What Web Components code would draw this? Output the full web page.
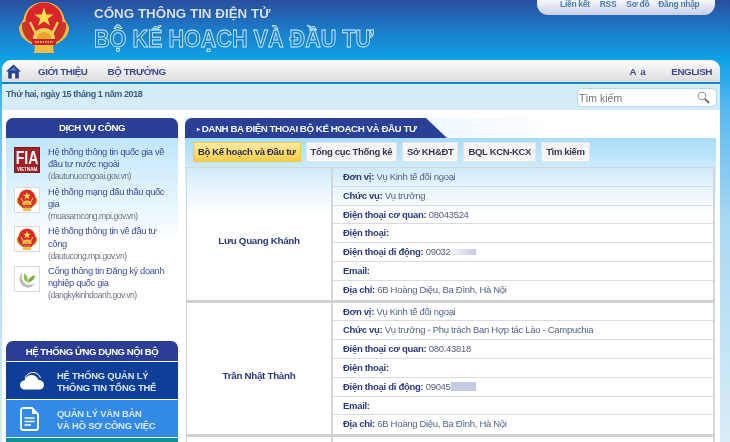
<!DOCTYPE html>
<html lang="vi">
<head>
<meta charset="utf-8">
<title>Danh bạ điện thoại</title>
<style>
    html, body { margin: 0; height: 442px; overflow: hidden; }
    body { font-family: "Liberation Sans", Arial, sans-serif; }
</style>
</head>
<body>
<site-page>
    <site-header></site-header>
    <site-nav></site-nav>
    <date-bar></date-bar>
    <page-columns>
        <side-column slot="side">
            <side-card heading="DỊCH VỤ CÔNG">
                <service-item icon="fia" domain="(dautunuocngoai.gov.vn)">Hệ thống thông tin quốc gia về đầu tư nước ngoài</service-item>
                <service-item icon="emblem" domain="(muasamcong.mpi.gov.vn)">Hệ thống mạng đấu thầu quốc gia</service-item>
                <service-item icon="emblem" domain="(dautucong.mpi.gov.vn)">Hệ thống thông tin về đầu tư công</service-item>
                <service-item icon="leaf" domain="(dangkykinhdoanh.gov.vn)">Cổng thông tin Đăng ký doanh nghiệp quốc gia</service-item>
            </side-card>
            <app-list heading="HỆ THỐNG ỨNG DỤNG NỘI BỘ">
                <app-tile icon="cloud" color="#0d3f98" line1="HỆ THỐNG QUẢN LÝ" line2="THÔNG TIN TỔNG THỂ"></app-tile>
                <app-tile icon="doc" color="#3389e6" line1="QUẢN LÝ VĂN BẢN" line2="VÀ HỒ SƠ CÔNG VIỆC"></app-tile>
                <app-tile icon="" color="#0f8f96" line1="" line2=""></app-tile>
            </app-list>
        </side-column>
        <dir-panel slot="main" heading="DANH BẠ ĐIỆN THOẠI BỘ KẾ HOẠCH VÀ ĐẦU TƯ">
            <contact-card name="Lưu Quang Khánh" unit="Vụ Kinh tế đối ngoại" role="Vụ trưởng" office="08043524" mobile="09032" mask="soft"></contact-card>
            <contact-card name="Trần Nhật Thành" unit="Vụ Kinh tế đối ngoại" role="Vụ trưởng - Phụ trách Ban Hợp tác Lào - Campuchia" office="080.43818" mobile="09045" mask="solid"></contact-card>
            <contact-card name="" unit="Vụ Kinh tế đối ngoại" role="" office="" mobile=""></contact-card>
        </dir-panel>
    </page-columns>
</site-page>

<script>
// shared drawing for the state emblem, used in the header and in the service list
const EMBLEM = `
    <svg viewBox="0 0 52 52" width="100%" height="100%" aria-hidden="true">
        <path d="M26 1C37 1 45 8 46.500 18L51 26C51 34 46 39 40 42L35 45L36 52H16L17 45L12 42C6 39 1 34 1 26L5.500 18C7 8 15 1 26 1Z" fill="#f2bd45"/>
        <circle cx="26" cy="20" r="18.500" fill="#d9262c"/>
        <path d="M4 22L9 20C10 27 13 31 17 35L15 42C9 39 3 33 4 22ZM48 22L43 20C42 27 39 31 35 35L37 42C43 39 49 33 48 22Z" fill="#c9362a"/>
        <path d="M26 6.500L28.300 13.400H35.600L29.700 17.700L32 24.600L26 20.400L20 24.600L22.300 17.700L16.400 13.400H23.700Z" fill="#fbe04a"/>
        <path d="M15 38C15 31 20 27 26 27C32 27 37 31 37 38Z" fill="#f7cf55"/>
        <path d="M19 38C19 34 22 31 26 31C30 31 33 34 33 38Z" fill="#e9a52e"/>
        <path d="M12 21L18 33M40 21L34 33" stroke="#f6cf5a" stroke-width="2.500"/>
        <rect x="14" y="38" width="24" height="6" fill="#c9242a"/>
        <path d="M17 41H35" stroke="#f7d76a" stroke-width="1.500" stroke-dasharray="1.500 1"/>
    </svg>`;

class SitePage extends HTMLElement {
    constructor() {
        super();
        this.attachShadow({ mode: 'open' });
        this.shadowRoot.innerHTML = `
            <style>
                :host {
                    display: block;
                    height: 442px;
                    overflow: hidden;
                    /* the reference is a soft, downscaled capture */
                    filter: blur(0.35px);
                    background: linear-gradient(#2a4f9f 0, #1b7cc8 30px, #0fa2e6 60px, #5ab9ee 110px, #a9d8f2 220px, #d8edf8 442px);
                }
            </style>
            <slot></slot>
        `;
    }
}

class SiteHeader extends HTMLElement {
    constructor() {
        super();
        this.attachShadow({ mode: 'open' });
        this.shadowRoot.innerHTML = `
            <style>
                :host {
                    display: flex;
                    height: 60px;
                    padding-left: 18px;
                    box-sizing: border-box;
                    justify-content: space-between;
                    align-items: flex-start;
                }
                .brand { display: flex; }
                .emblem { width: 52px; height: 52px; margin-top: 1px; }
                .titles { margin-left: 24px; padding-top: 5px; font-weight: bold; }
                .small {
                    color: #d9e0ea;
                    font-size: 13.400px;
                    line-height: 18px;
                    text-shadow: 0 0 1px #1d3f86;
                }
                .big {
                    color: #1a80d0;
                    font-size: 21.600px;
                    line-height: 28px;
                    margin-top: 2px;
                    transform: scaleY(1.12);
                    -webkit-text-stroke: 0.800px #cfeeff;
                    white-space: nowrap;
                }
                .links {
                    display: flex;
                    width: 178px;
                    box-sizing: border-box;
                    margin-right: 15px;
                    height: 15px;
                    padding: 0 0 0 23px;
                    background: linear-gradient(#f6f7fb, #c8d0e6);
                    border-radius: 0 0 11px 11px;
                    font-size: 8.500px;
                    font-weight: bold;
                    letter-spacing: -0.300px;
                    line-height: 8px;
                    color: #4a7db8;
                }
                .links span:nth-child(1) { margin-right: 10px; }
                .links span:nth-child(2) { margin-right: 10px; }
                .links span:nth-child(3) { margin-right: 9px; }
            </style>
            <div class="brand">
                <div class="emblem">${EMBLEM}</div>
                <div class="titles">
                    <div class="small">CỔNG THÔNG TIN ĐIỆN TỬ</div>
                    <div class="big">BỘ KẾ HOẠCH VÀ ĐẦU TƯ</div>
                </div>
            </div>
            <div class="links"><span>Liên kết</span><span>RSS</span><span>Sơ đồ</span><span>Đăng nhập</span></div>
        `;
    }
}

class SiteNav extends HTMLElement {
    constructor() {
        super();
        this.attachShadow({ mode: 'open' });
        this.shadowRoot.innerHTML = `
            <style>
                :host {
                    display: flex;
                    align-items: center;
                    height: 22px;
                    margin: 0 10px 0 2px;
                    background: linear-gradient(#fdfdfd, #dcdce0);
                    border-bottom: 2px solid #1684c8;
                    border-radius: 9px 9px 0 0;
                    font-size: 9.800px;
                    letter-spacing: -0.400px;
                    font-weight: bold;
                    color: #3b4a8c;
                }
                svg { width: 15px; height: 15px; margin-left: 4px; }
                .first { margin-left: 17px; }
                .second { margin-left: 20px; }
                .right { margin-left: auto; display: flex; }
                .size { margin-right: 26px; word-spacing: 2px; }
                .lang { margin-right: 8px; }
            </style>
            <svg viewBox="0 0 15 15" aria-hidden="true">
                <path d="M7.500 0.500L15 7.500H12.800V14.500H2.200V7.500H0Z" fill="#27408f"/>
                <path d="M5.800 14.500V9.500H9.200V14.500Z" fill="#fff"/>
                <path d="M7.500 3L11.500 6.800H3.500Z" fill="#5b78c4"/>
            </svg>
            <span class="first">GIỚI THIỆU</span>
            <span class="second">BỘ TRƯỞNG</span>
            <div class="right"><span class="size">A a</span><span class="lang">ENGLISH</span></div>
        `;
    }
}

class DateBar extends HTMLElement {
    constructor() {
        super();
        this.attachShadow({ mode: 'open' });
        this.shadowRoot.innerHTML = `
            <style>
                :host {
                    display: flex;
                    justify-content: space-between;
                    align-items: flex-start;
                    height: 26px;
                    margin: 0 10px 0 2px;
                    padding: 4px 3px 0 4px;
                    box-sizing: border-box;
                    background: #d4edf8;
                }
                .date { font-size: 9px; letter-spacing: -0.400px; font-weight: bold; color: #3c5a86; margin-top: 1px; }
                .search {
                    display: flex;
                    align-items: center;
                    justify-content: space-between;
                    width: 140px;
                    height: 19px;
                    box-sizing: border-box;
                    padding: 0 6px 0 1px;
                    background: #fff;
                    border: 1px solid #b9d6ea;
                    border-radius: 5px;
                    font-size: 10.500px;
                    color: #6e7478;
                }
                svg { width: 13px; height: 13px; }
            </style>
            <span class="date">Thứ hai, ngày 15 tháng 1 năm 2018</span>
            <div class="search">
                <span>Tìm kiếm</span>
                <svg viewBox="0 0 13 13" aria-hidden="true">
                    <circle cx="5" cy="5" r="3.800" fill="#fff" stroke="#8d9296" stroke-width="1"/>
                    <path d="M8 8L12 12" stroke="#6c7074" stroke-width="2"/>
                </svg>
            </div>
        `;
    }
}

class PageColumns extends HTMLElement {
    constructor() {
        super();
        this.attachShadow({ mode: 'open' });
        this.shadowRoot.innerHTML = `
            <style>
                :host {
                    display: flex;
                    align-items: flex-start;
                    margin: 0 10px 0 2px;
                    height: 332px;
                    padding: 8px 4px 0 4px;
                    box-sizing: border-box;
                    background: #fff;
                }
                .side { display: block; width: 172px; flex: none; }
                .main { display: block; margin-left: 7px; flex: 1; }
            </style>
            <div class="side"><slot name="side"></slot></div>
            <div class="main"><slot name="main"></slot></div>
        `;
    }
}

class SideColumn extends HTMLElement {
    constructor() {
        super();
        this.attachShadow({ mode: 'open' });
        this.shadowRoot.innerHTML = `
            <style>:host { display: block; }</style>
            <slot></slot>
        `;
    }
}

class SideCard extends HTMLElement {
    constructor() {
        super();
        this.attachShadow({ mode: 'open' });
        this.shadowRoot.innerHTML = `
            <style>
                :host {
                    display: block;
                    height: 223px;
                    background: linear-gradient(#bfe6fb 19px, #ffffff 125px);
                    border-radius: 7px 7px 0 0;
                }
                h3 {
                    margin: 0;
                    height: 20px;
                    background: #2a3f96;
                    border-radius: 7px 7px 0 0;
                    color: #fff;
                    font-size: 9.600px;
                    letter-spacing: -0.400px;
                    line-height: 20px;
                    text-align: center;
                }
                .list { padding: 7px 0 0 8px; }
            </style>
            <h3>${this.getAttribute('heading')}</h3>
            <div class="list"><slot></slot></div>
        `;
    }
}

class ServiceItem extends HTMLElement {
    constructor() {
        super();
        this.attachShadow({ mode: 'open' });
        this.shadowRoot.innerHTML = `
            <style>
                :host {
                    display: flex;
                    height: 39.700px;
                }
                .icon {
                    width: 26px;
                    height: 26px;
                    flex: none;
                    margin-top: 2px;
                    box-sizing: border-box;
                    background: #fff;
                    border: 1px solid #dcdcdc;
                    padding: 1px;
                }
                .icon.fia {
                    border: 1px solid #7c1a1e;
                    background: #a42027;
                    color: #fff;
                    padding: 0;
                    text-align: center;
                    font-weight: bold;
                    overflow: hidden;
                }
                .fia b { display: block; font-size: 14px; line-height: 14px; margin-top: 3px; transform: scaleY(1.25); font-family: "Liberation Sans Narrow", "Liberation Sans", sans-serif; }
                .fia i { display: block; font-style: normal; font-size: 4.500px; line-height: 5px; margin-top: 2px; }
                .text { margin-left: 8px; margin-top: 1px; width: 124px; font-size: 9.400px; letter-spacing: -0.370px; line-height: 12.200px; }
                .name { color: #3d4ba2; }
                .domain { color: #6d7580; font-size: 8.600px; letter-spacing: -0.480px; }
            </style>
            <div class="icon ${this.getAttribute('icon')}">${this._iconMarkup()}</div>
            <div class="text">
                <div class="name"><slot></slot></div>
                <div class="domain">${this.getAttribute('domain')}</div>
            </div>
        `;
    }

    _iconMarkup() {
        const icon = this.getAttribute('icon');
        if (icon === 'fia') {
            return '<b>FIA</b><i>VIETNAM</i>';
        }
        if (icon === 'leaf') {
            return `<svg viewBox="0 0 24 24" width="100%" height="100%" aria-hidden="true">
                <path d="M7 4C2 9 3 19 11 21C16 22 20 19 21 16C17 20 9 19 7 13C6 10 6 7 7 4Z" fill="#b9bdb4"/>
                <path d="M12 16C8 13 8 9 9 6C12 8 14 12 12 16Z" fill="#8fbf4a"/>
                <path d="M13 16C13 12 16 9 21 8C20 12 18 15 13 16Z" fill="#79ae38"/>
            </svg>`;
        }
        return EMBLEM;
    }
}

class AppList extends HTMLElement {
    constructor() {
        super();
        this.attachShadow({ mode: 'open' });
        this.shadowRoot.innerHTML = `
            <style>
                :host { display: block; }
                h3 {
                    margin: 0;
                    height: 20px;
                    background: #2b3d94;
                    border-radius: 7px 7px 0 0;
                    color: #fff;
                    font-size: 9.600px;
                    letter-spacing: -0.450px;
                    line-height: 21px;
                    text-align: center;
                }
            </style>
            <h3>${this.getAttribute('heading')}</h3>
            <slot></slot>
        `;
    }
}

class AppTile extends HTMLElement {
    constructor() {
        super();
        const icons = {
            cloud: `<svg viewBox="0 0 24 18" width="24" height="18" aria-hidden="true">
                <path d="M5 17.500C1.500 17.500 0 15 0 13C0 10.500 2 8.500 4.500 8.500C5.500 5 8.500 3 11.500 3C15 3 17.500 5 18.500 8C21.500 8 24 10 24 13C24 15.500 22 17.500 19.500 17.500Z" fill="#fff"/>
                <path d="M5 6C7 1.500 11 0 14 0.500C17 1 19.500 3 20.500 6" fill="none" stroke="#fff" stroke-width="1"/>
            </svg>`,
            doc: `<svg viewBox="0 0 19 24" width="19" height="24" aria-hidden="true">
                <path d="M3 1H12L18 7V21C18 22.200 17.200 23 16 23H3C1.800 23 1 22.200 1 21V3C1 1.800 1.800 1 3 1Z" fill="none" stroke="#fff" stroke-width="1.800"/>
                <path d="M12 1V7H18Z" fill="#fff"/>
                <path d="M4.500 11H14.500M4.500 14.500H14.500M4.500 18H11" stroke="#fff" stroke-width="1.600"/>
            </svg>`
        };
        this.attachShadow({ mode: 'open' });
        this.shadowRoot.innerHTML = `
            <style>
                :host {
                    display: flex;
                    align-items: center;
                    height: 37px;
                    margin-top: 1px;
                    background: ${this.getAttribute('color')};
                    color: #e8f2ff;
                }
                .icon { width: 51px; flex: none; display: flex; padding-left: 14px; box-sizing: border-box; }
                .text { font-size: 9.400px; font-weight: bold; line-height: 11.500px; letter-spacing: -0.190px; margin-top: 2px; opacity: .93; }
            </style>
            <div class="icon">${icons[this.getAttribute('icon')] || ''}</div>
            <div class="text">${this.getAttribute('line1')}<br>${this.getAttribute('line2')}</div>
        `;
    }
}

class DirPanel extends HTMLElement {
    constructor() {
        super();
        const tabs = ['Bộ Kế hoạch và Đầu tư', 'Tổng cục Thống kê', 'Sở KH&amp;ĐT', 'BQL KCN-KCX', 'Tìm kiếm'];
        this.attachShadow({ mode: 'open' });
        this.shadowRoot.innerHTML = `
            <style>
                :host {
                    display: block;
                    width: 531px;
                    height: 324px;
                    overflow: hidden;
                    background: linear-gradient(#a6dcf9 20px, #e5f4fc 68px, #ffffff 98px);
                }
                .title {
                    background: linear-gradient(90deg, #c9e9fb, #ffffff 70%);
                }
                h2 {
                    margin: 0;
                    height: 20px;
                    width: 262px;
                    box-sizing: border-box;
                    padding-left: 12px;
                    background: #2a3f96;
                    border-radius: 7px 0 0 0;
                    clip-path: polygon(0 0, 241px 0, 100% 100%, 0 100%);
                    color: #f4f6ff;
                    font-size: 9.800px;
                    letter-spacing: -0.480px;
                    line-height: 21px;
                    white-space: nowrap;
                }
                h2 i { font-style: normal; font-size: 6px; vertical-align: 1px; }
                .tabs { display: flex; gap: 5px; padding: 4px 0 6px 8px; }
                .tab {
                    height: 20px;
                    box-sizing: border-box;
                    padding: 0 4px;
                    background: #f5f5f5;
                    border: 1px solid #e2e4e6;
                    font-size: 9.500px;
                    font-weight: bold;
                    line-height: 18px;
                    color: #333a4a;
                    letter-spacing: -0.330px;
                    white-space: nowrap;
                }
                .tab.on {
                    background: linear-gradient(#fde9a6, #f8cd4e);
                    border-color: #f1c64c;
                    color: #2c3040;
                    padding: 0 4px;
                }
                .rows { margin-left: 1px; width: 529px; border-top: 1px solid #d4d7da; margin-top: -1px; }
            </style>
            <div class="title"><h2><i>▸</i> ${this.getAttribute('heading')}</h2></div>
            <div class="tabs">
                ${tabs.map((t, i) => `<span class="tab${i === 0 ? ' on' : ''}">${t}</span>`).join('')}
            </div>
            <div class="rows"><slot></slot></div>
        `;
    }
}

class ContactCard extends HTMLElement {
    constructor() {
        super();
        const attr = (n) => this.getAttribute(n) || '';
        const mask = attr('mask');
        this.attachShadow({ mode: 'open' });
        this.shadowRoot.innerHTML = `
            <style>
                :host {
                    display: grid;
                    grid-template-columns: 146px 1fr;
                    border-left: 1px solid #d4d7da;
                    border-right: 2px solid #d4d7da;
                    border-bottom: 3px solid #cfd2d5;
                }
                .name {
                    display: flex;
                    align-items: center;
                    justify-content: center;
                    padding-top: 14px;
                    font-size: 9.800px;
                    letter-spacing: -0.300px;
                    font-weight: bold;
                    color: #2b3a7c;
                    border-right: 2px solid #d4d7da;
                }
                .row {
                    height: 18.800px;
                    box-sizing: border-box;
                    padding-left: 10px;
                    border-bottom: 1px solid #d9dcdf;
                    font-size: 9.500px;
                    letter-spacing: -0.300px;
                    line-height: 18px;
                    color: #55618a;
                    white-space: nowrap;
                }
                .row:last-child { border-bottom: 0; }
                b { color: #2b3a80; }
                .mask { display: inline-block; width: 25px; height: 9px; vertical-align: -1px; background: #c6cbe4; }
                .mask.soft { background: linear-gradient(90deg, #f3f4fa, #c6cbe4); height: 6px; vertical-align: 0; }
            </style>
            <div class="name">${attr('name')}</div>
            <div>
                <div class="row"><b>Đơn vị:</b> ${attr('unit')}</div>
                <div class="row"><b>Chức vụ:</b> ${attr('role')}</div>
                <div class="row"><b>Điện thoại cơ quan:</b> ${attr('office')}</div>
                <div class="row"><b>Điện thoại:</b></div>
                <div class="row"><b>Điện thoại di động:</b> ${attr('mobile')}${mask ? `<span class="mask ${mask}"></span>` : ''}</div>
                <div class="row"><b>Email:</b></div>
                <div class="row"><b>Địa chỉ:</b> 6B Hoàng Diệu, Ba Đình, Hà Nội</div>
            </div>
        `;
    }
}

customElements.define('site-page', SitePage);
customElements.define('site-header', SiteHeader);
customElements.define('site-nav', SiteNav);
customElements.define('date-bar', DateBar);
customElements.define('page-columns', PageColumns);
customElements.define('side-column', SideColumn);
customElements.define('side-card', SideCard);
customElements.define('service-item', ServiceItem);
customElements.define('app-list', AppList);
customElements.define('app-tile', AppTile);
customElements.define('dir-panel', DirPanel);
customElements.define('contact-card', ContactCard);
</script>
</body>
</html>
